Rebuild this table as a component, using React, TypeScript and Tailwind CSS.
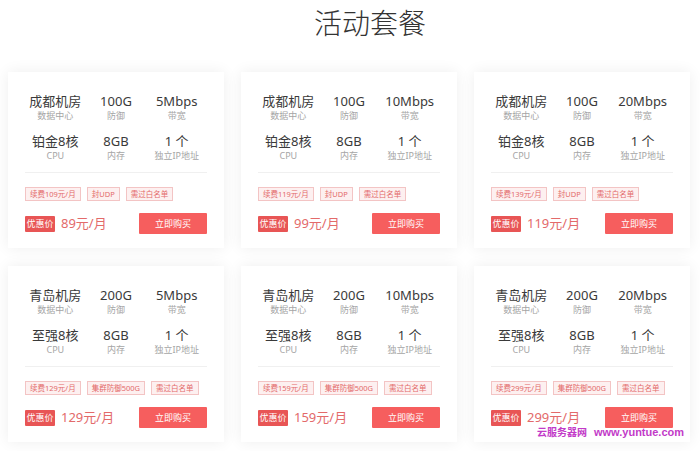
import React from "react";

type Plan = {
  room: string;
  defense: string;
  bandwidth: string;
  cpu: string;
  tags: string[];
  price: string;
};

const plans: Plan[] = [
  { room: "成都机房", defense: "100G", bandwidth: "5Mbps", cpu: "铂金8核", tags: ["续费109元/月", "封UDP", "需过白名单"], price: "89元/月" },
  { room: "成都机房", defense: "100G", bandwidth: "10Mbps", cpu: "铂金8核", tags: ["续费119元/月", "封UDP", "需过白名单"], price: "99元/月" },
  { room: "成都机房", defense: "100G", bandwidth: "20Mbps", cpu: "铂金8核", tags: ["续费139元/月", "封UDP", "需过白名单"], price: "119元/月" },
  { room: "青岛机房", defense: "200G", bandwidth: "5Mbps", cpu: "至强8核", tags: ["续费129元/月", "集群防御500G", "需过白名单"], price: "129元/月" },
  { room: "青岛机房", defense: "200G", bandwidth: "10Mbps", cpu: "至强8核", tags: ["续费159元/月", "集群防御500G", "需过白名单"], price: "159元/月" },
  { room: "青岛机房", defense: "200G", bandwidth: "20Mbps", cpu: "至强8核", tags: ["续费299元/月", "集群防御500G", "需过白名单"], price: "299元/月" },
];

function Spec({ value, label }: { value: string; label: string }) {
  return (
    <div className="flex flex-col items-center">
      <span className="text-[13px] leading-[18px] text-[#3a3a3a]">{value}</span>
      <span className="text-[9px] leading-[12px] text-[#a5a5a5]">{label}</span>
    </div>
  );
}

function PlanCard({ room, defense, bandwidth, cpu, tags, price }: Plan) {
  return (
    <article className="h-[176px] bg-white px-[17px] pt-[20px] shadow-[0_0_14px_rgba(0,0,0,0.07)]">
      <div className="grid grid-cols-3 gap-y-[10px]">
        <Spec value={room} label="数据中心" />
        <Spec value={defense} label="防御" />
        <Spec value={bandwidth} label="带宽" />
        <Spec value={cpu} label="CPU" />
        <Spec value="8GB" label="内存" />
        <Spec value="1 个" label="独立IP地址" />
      </div>
      <div className="mt-[10px] border-t border-[#f0f0f0]" />
      <div className="mt-[14px] flex gap-[6px]">
        {tags.map((t) => (
          <span
            key={t}
            className="h-[14px] whitespace-nowrap border border-[#f3c4c4] bg-[#fdf0f0] px-[4px] text-[7.5px] leading-[12px] text-[#e36a6a]"
          >
            {t}
          </span>
        ))}
      </div>
      <div className="mt-[12px] flex items-center">
        <span className="h-[16px] w-[30px] rounded-[1px] bg-[#e85555] text-center text-[9px] leading-[16px] text-white">
          优惠价
        </span>
        <span className="ml-[6px] text-[13px] text-[#e36a6a]">{price}</span>
        <button className="ml-auto h-[21px] w-[68px] rounded-[1px] bg-[#f65e5e] text-[9px] text-white">
          立即购买
        </button>
      </div>
    </article>
  );
}

export default function App() {
  return (
    <div
      className="relative h-[451px] w-[700px] overflow-hidden bg-white"
      style={{ fontFamily: '"Noto Sans", "Noto Sans CJK SC", sans-serif' }}
    >
      <h1 className="mt-[9px] pl-[40px] text-center text-[28px] font-light leading-[28px] text-[#333]">
        活动套餐
      </h1>
      <div className="mt-[35px] grid grid-cols-[216px_216px_216px] gap-x-[17px] gap-y-[18px] px-[8px]">
        {plans.map((p, i) => (
          <PlanCard key={i} {...p} />
        ))}
      </div>
      <div className="absolute left-[537px] top-[425px] flex items-center gap-[7px] whitespace-nowrap font-bold leading-[14px] text-[#c23ac8]">
        <span className="text-[10px]">云服务器网</span>
        <span className="text-[11px]" style={{ fontFamily: '"Liberation Sans", sans-serif' }}>
          www.yuntue.com
        </span>
      </div>
    </div>
  );
}
